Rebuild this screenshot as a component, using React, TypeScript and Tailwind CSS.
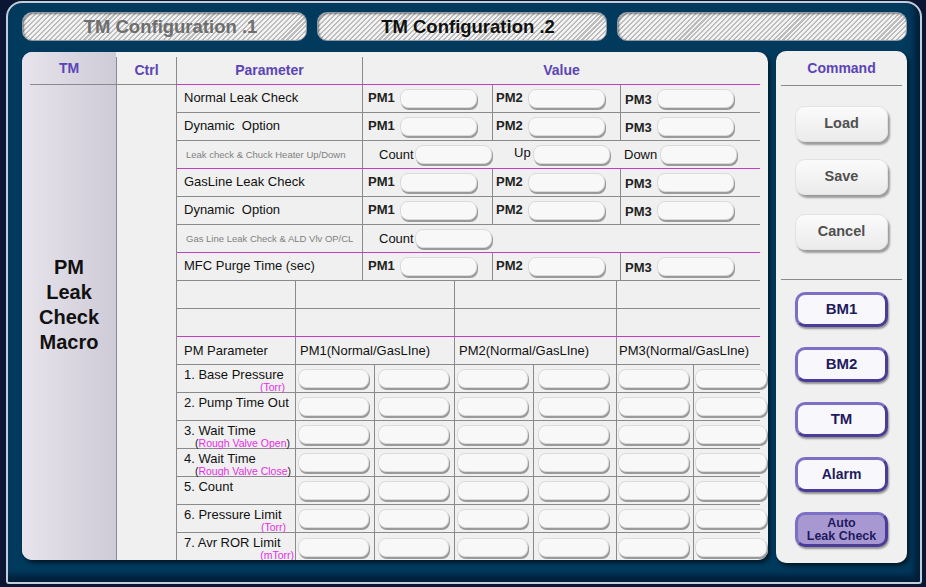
import React from 'react';

const GRAY = 'border-[#8a8a8a]';
const MAGENTA = 'border-[#c23ec6]';

function Field({ className = 'w-[77px]' }: { className?: string }) {
  return (
    <div
      className={`${className} h-[19px] shrink-0 rounded-[8px] border border-[#dadada] bg-[#f8f8f8] shadow-[1px_2px_0_#9a9a9a]`}
    />
  );
}

function Tab({ className, children }: { className: string; children?: React.ReactNode }) {
  return (
    <div
      className={`${className} h-[29px] shrink-0 rounded-[10px] border border-[#8e99a4] bg-[repeating-linear-gradient(135deg,#f3f3f3_0px,#f3f3f3_2px,#bcbcbc_2px,#bcbcbc_3.5px)] shadow-[inset_1px_1px_2px_rgba(0,0,0,0.45)] flex items-center justify-center pt-[1px] pl-[12px] text-[18.5px] font-bold`}
    >
      {children}
    </div>
  );
}

function PmRow({ label, border }: { label: string; border: string }) {
  return (
    <div className={`h-[28px] shrink-0 flex border-b ${border}`}>
      <div className="w-[185px] shrink-0 pl-[7px] pb-[2px] flex items-center text-[13px] text-[#111] whitespace-pre">{label}</div>
      <div className={`w-[130px] shrink-0 border-l ${GRAY} pl-[5px] flex items-center`}>
        <span className="w-[32px] pb-[1px] text-[13px] font-bold text-[#222]">PM1</span>
        <Field />
      </div>
      <div className={`w-[128px] shrink-0 border-l ${GRAY} pl-[3px] flex items-center`}>
        <span className="w-[32px] pb-[1px] text-[13px] font-bold text-[#222]">PM2</span>
        <Field />
      </div>
      <div className={`flex-1 min-w-0 border-l ${GRAY} pl-[4px] flex items-center`}>
        <span className="w-[32px] pt-[3px] text-[13px] font-bold text-[#222]">PM3</span>
        <Field />
      </div>
    </div>
  );
}

function NoteRow({ label, full }: { label: string; full: boolean }) {
  return (
    <div className={`h-[28px] shrink-0 flex border-b ${MAGENTA}`}>
      <div className="w-[185px] shrink-0 pl-[9px] pt-[2px] flex items-center text-[9.5px] text-[#808080]">{label}</div>
      <div className={`flex-1 min-w-0 border-l ${GRAY} flex items-center text-[13px] text-[#111]`}>
        <div className="w-[129px] shrink-0 pl-[16px] flex items-center">
          <span className="w-[40px]">Count</span>
          <Field />
        </div>
        {full && (
          <>
            <div className="w-[128px] shrink-0 pl-[22px] flex items-center">
              <span className="w-[19px] -mt-[3px]">Up</span>
              <Field />
            </div>
            <div className="pl-[4px] flex items-center">
              <span className="w-[36px]">Down</span>
              <Field />
            </div>
          </>
        )}
      </div>
    </div>
  );
}

const lowerRows: { t: string; sub?: string; paren?: boolean; pr: string }[] = [
  { t: '1. Base Pressure', sub: '(Torr)', pr: 'pr-[10px]' },
  { t: '2. Pump Time Out', pr: '' },
  { t: '3. Wait Time', sub: 'Rough Valve Open', paren: true, pr: 'pr-[5px]' },
  { t: '4. Wait Time', sub: 'Rough Valve Close', paren: true, pr: 'pr-[4px]' },
  { t: '5. Count', pr: '' },
  { t: '6. Pressure Limit', sub: '(Torr)', pr: 'pr-[9px]' },
  { t: '7. Avr ROR Limit', sub: '(mTorr)', pr: 'pr-[1px]' },
];

function GrayButton({ className, children }: { className: string; children: React.ReactNode }) {
  return (
    <div
      className={`${className} w-[93px] h-[36px] shrink-0 rounded-[10px] border border-[#e2e2e2] bg-[linear-gradient(180deg,#fbfbfb,#ebebeb)] shadow-[2px_3px_2px_rgba(0,0,0,0.35)] flex items-center justify-center text-[14.5px] font-bold text-[#505050]`}
    >
      {children}
    </div>
  );
}

function NavButton({ className, children }: { className: string; children: React.ReactNode }) {
  return (
    <div
      className={`${className} w-[93px] h-[35px] shrink-0 rounded-[10px] border-[3px] border-[#7d70c4] border-r-[#4a3c98] border-b-[#4a3c98] shadow-[1px_2px_2px_rgba(0,0,0,0.4)] flex items-center justify-center font-bold text-[#1f1b5e] text-center`}
    >
      {children}
    </div>
  );
}

export default function App() {
  return (
    <div className="w-[926px] h-[587px] overflow-hidden bg-[#0a1634] font-['Liberation_Sans',Arial,sans-serif]">
      <div className="ml-[6px] mt-[1px] w-[916px] h-[583px] rounded-t-[16px] rounded-b-[3px] border-2 border-[#c4ced8] bg-[#023a5e] shadow-[inset_-6px_-7px_6px_rgba(0,10,30,0.55)] pl-[14px] pt-[9px]">
        {/* tabs */}
        <div className="flex gap-[10px]">
          <Tab className="w-[285px] text-[#6e6e6e]">TM Configuration .1</Tab>
          <Tab className="w-[290px] text-[#111]">TM Configuration .2</Tab>
          <Tab className="w-[290px]" />
        </div>

        <div className="mt-[11px] flex gap-[8px] items-start">
          {/* main panel */}
          <div className="w-[746px] h-[508px] shrink-0 rounded-[10px] bg-[#f0f0f0] overflow-hidden flex shadow-[2px_3px_4px_rgba(0,0,0,0.6)]">
            <div className="w-[94px] shrink-0 bg-[linear-gradient(90deg,#e7e4ec,#cecad7)] flex flex-col">
              <div className={`h-[33px] ml-[8px] pr-[8px] border-b ${GRAY} flex items-center justify-center text-[14px] font-bold text-[#5b45b5]`}>
                TM
              </div>
              <div className="pt-[170px] flex flex-col items-center text-[20px] font-bold leading-[25px] text-[#111]">
                <span>PM</span>
                <span>Leak</span>
                <span>Check</span>
                <span>Macro</span>
              </div>
            </div>

            <div className="w-[652px] shrink-0 flex flex-col">
              {/* header */}
              <div className="h-[33px] shrink-0 flex text-[14px] font-bold text-[#5b45b5]">
                <div className={`w-[60px] shrink-0 border-b ${GRAY} flex flex-col`}>
                  <div className={`mt-[5px] flex-1 border-l ${GRAY} flex items-center justify-center`}>Ctrl</div>
                </div>
                <div className={`w-[186px] shrink-0 border-b ${MAGENTA} flex flex-col`}>
                  <div className={`mt-[5px] flex-1 border-l ${GRAY} flex items-center justify-center`}>Parameter</div>
                </div>
                <div className={`w-[398px] shrink-0 border-b ${MAGENTA} flex flex-col`}>
                  <div className={`mt-[5px] flex-1 border-l ${GRAY} flex items-center justify-center`}>Value</div>
                </div>
              </div>

              {/* body */}
              <div className="flex flex-1">
                <div className={`w-[60px] shrink-0 border-l ${GRAY}`} />
                <div className={`w-[584px] shrink-0 border-l ${GRAY} flex flex-col`}>
                  <PmRow label="Normal Leak Check" border={GRAY} />
                  <PmRow label="Dynamic  Option" border={GRAY} />
                  <NoteRow label="Leak check & Chuck Heater Up/Down" full />
                  <PmRow label="GasLine Leak Check" border={GRAY} />
                  <PmRow label="Dynamic  Option" border={GRAY} />
                  <NoteRow label="Gas Line Leak Check & ALD Vlv OP/CL" full={false} />
                  <PmRow label="MFC Purge Time (sec)" border={GRAY} />

                  {/* lower section */}
                  {[GRAY, MAGENTA].map((b, i) => (
                    <div key={i} className={`h-[28px] shrink-0 flex border-b ${b}`}>
                      <div className="w-[118px] shrink-0" />
                      <div className={`w-[159px] shrink-0 border-l ${GRAY}`} />
                      <div className={`w-[162px] shrink-0 border-l ${GRAY}`} />
                      <div className={`flex-1 min-w-0 border-l ${GRAY}`} />
                    </div>
                  ))}
                  <div className={`h-[28px] shrink-0 flex border-b ${GRAY} text-[13px] text-[#111]`}>
                    <div className="w-[118px] shrink-0 pl-[7px] flex items-center">PM Parameter</div>
                    <div className={`w-[159px] shrink-0 border-l ${GRAY} pl-[4px] flex items-center`}>PM1(Normal/GasLIne)</div>
                    <div className={`w-[162px] shrink-0 border-l ${GRAY} pl-[4px] flex items-center`}>PM2(Normal/GasLIne)</div>
                    <div className={`flex-1 min-w-0 border-l ${GRAY} pl-[2px] flex items-center whitespace-nowrap`}>PM3(Normal/GasLIne)</div>
                  </div>
                  {lowerRows.map((r, i) => (
                    <div key={i} className={`h-[28px] shrink-0 flex ${i < lowerRows.length - 1 ? `border-b ${GRAY}` : ''}`}>
                      <div className="w-[118px] shrink-0 pl-[7px] pt-[2px] flex flex-col text-[#111]">
                        <span className="text-[13px] leading-[15px] whitespace-nowrap">{r.t}</span>
                        {r.sub && (
                          <span className={`text-[10.5px] leading-[11px] text-right whitespace-nowrap ${r.pr} ${r.paren ? 'text-[#111]' : 'text-[#e62ee6]'}`}>
                            {r.paren ? (
                              <>
                                (<span className="text-[#e62ee6]">{r.sub}</span>)
                              </>
                            ) : (
                              r.sub
                            )}
                          </span>
                        )}
                      </div>
                      <div className={`w-[79px] shrink-0 border-l ${GRAY} pl-[2px] flex items-center`}>
                        <Field className="w-[71px]" />
                      </div>
                      <div className={`w-[80px] shrink-0 border-l ${GRAY} pl-[3px] flex items-center`}>
                        <Field className="w-[71px]" />
                      </div>
                      <div className={`w-[79px] shrink-0 border-l ${GRAY} pl-[2px] flex items-center`}>
                        <Field className="w-[71px]" />
                      </div>
                      <div className={`w-[83px] shrink-0 border-l ${GRAY} pl-[4px] flex items-center`}>
                        <Field className="w-[71px]" />
                      </div>
                      <div className={`w-[77px] shrink-0 border-l ${GRAY} pl-[1px] flex items-center`}>
                        <Field className="w-[71px]" />
                      </div>
                      <div className={`flex-1 min-w-0 border-l ${GRAY} pl-[1px] flex items-center`}>
                        <Field className="w-[72px]" />
                      </div>
                    </div>
                  ))}
                </div>
              </div>
            </div>
          </div>

          {/* command panel */}
          <div className="w-[131px] h-[512px] shrink-0 -mt-[1px] rounded-[10px] bg-[#f0f0f0] shadow-[2px_3px_4px_rgba(0,0,0,0.6)] flex flex-col items-center">
            <div className={`w-[121px] h-[35px] shrink-0 pt-[1px] border-b ${GRAY} flex items-center justify-center text-[14px] font-bold text-[#5b45b5]`}>
              Command
            </div>
            <GrayButton className="mt-[20px]">Load</GrayButton>
            <GrayButton className="mt-[17px]">Save</GrayButton>
            <GrayButton className="mt-[19px]">Cancel</GrayButton>
            <div className={`w-[121px] h-[30px] shrink-0 border-b ${GRAY}`} />
            <NavButton className="mt-[12px] bg-[#f8f8fc] text-[15px]">BM1</NavButton>
            <NavButton className="mt-[20px] bg-[#f8f8fc] text-[15px]">BM2</NavButton>
            <NavButton className="mt-[20px] bg-[#f8f8fc] text-[15px]">TM</NavButton>
            <NavButton className="mt-[20px] bg-[#f8f8fc] text-[14px]">Alarm</NavButton>
            <NavButton className="mt-[20px] bg-[#a898d2] text-[12.5px] leading-[13px]">
              Auto
              <br />
              Leak Check
            </NavButton>
          </div>
        </div>
      </div>
    </div>
  );
}
